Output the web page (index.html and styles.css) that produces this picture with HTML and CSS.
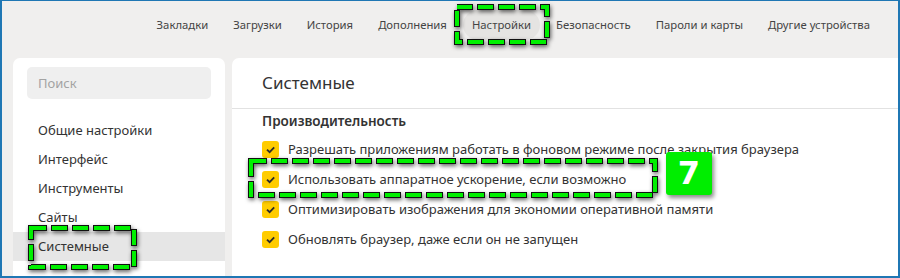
FILE: index.html
```html
<!DOCTYPE html>
<html lang="ru">
<head>
    <meta charset="UTF-8">
    <title>Настройки</title>
    <link rel="stylesheet" href="styles.css">
</head>
<body>
    <div class="frame">
        <nav class="topnav">
            <span class="tab">Закладки</span>
            <span class="tab">Загрузки</span>
            <span class="tab">История</span>
            <span class="tab">Дополнения</span>
            <span class="tab active">Настройки</span>
            <span class="tab">Безопасность</span>
            <span class="tab">Пароли и карты</span>
            <span class="tab">Другие устройства</span>
        </nav>
        <div class="content">
            <aside class="sidebar">
                <div class="search">Поиск</div>
                <ul class="menu">
                    <li>Общие настройки</li>
                    <li>Интерфейс</li>
                    <li>Инструменты</li>
                    <li>Сайты</li>
                    <li class="selected">Системные</li>
                </ul>
            </aside>
            <main class="panel">
                <h1 class="panel-title">Системные</h1>
                <section class="group">
                    <h2 class="group-title">Производительность</h2>
                    <label class="option"><span class="check"><svg width="17" height="17" viewBox="0 0 17 17"><path d="M5 8.6l2.6 2.6L12.2 6.4" fill="none" stroke="#2b2b2b" stroke-width="1.8"/></svg></span>Разрешать приложениям работать в фоновом режиме после закрытия браузера</label>
                    <label class="option"><span class="check"><svg width="17" height="17" viewBox="0 0 17 17"><path d="M5 8.6l2.6 2.6L12.2 6.4" fill="none" stroke="#2b2b2b" stroke-width="1.8"/></svg></span>Использовать аппаратное ускорение, если возможно</label>
                    <label class="option"><span class="check"><svg width="17" height="17" viewBox="0 0 17 17"><path d="M5 8.6l2.6 2.6L12.2 6.4" fill="none" stroke="#2b2b2b" stroke-width="1.8"/></svg></span>Оптимизировать изображения для экономии оперативной памяти</label>
                    <label class="option"><span class="check"><svg width="17" height="17" viewBox="0 0 17 17"><path d="M5 8.6l2.6 2.6L12.2 6.4" fill="none" stroke="#2b2b2b" stroke-width="1.8"/></svg></span>Обновлять браузер, даже если он не запущен</label>
                </section>
            </main>
        </div>

        <!-- пометки поверх скриншота -->
        <svg class="mark mark-nav" width="96" height="41">
            <rect class="mark-line" x="3" y="3" width="90" height="35"/>
            <rect class="mark-dash" x="3" y="3" width="90" height="35"/>
        </svg>
        <svg class="mark mark-side" width="109" height="45">
            <rect class="mark-line" x="3" y="3" width="103" height="39"/>
            <rect class="mark-dash" x="3" y="3" width="103" height="39"/>
        </svg>
        <svg class="mark mark-row" width="410" height="40">
            <rect class="mark-line" x="3" y="3" width="404" height="34"/>
            <rect class="mark-dash" x="3" y="3" width="404" height="34"/>
        </svg>
        <div class="step">7</div>
    </div>
</body>
</html>
```

FILE: styles.css
```css
* {
    box-sizing: border-box;
}
body {
    margin: 0;
    font-family: "Noto Sans", "Open Sans", sans-serif;
    color: #333;
}
.frame {
    position: relative;
    width: 900px;
    height: 278px;
    border: 2px solid #1f77b4;
    border-top-width: 1px;
    background: #f0efee;
    overflow: hidden;
}
.topnav {
    display: flex;
    justify-content: flex-end;
    gap: 7px;
    height: 57px;
    padding: 9px 19px 0 0;
}
.tab {
    height: 30px;
    line-height: 30px;
    padding: 0 9px;
    font-size: 11.3px;
    color: #444;
    border-radius: 15px;
}
.tab.active {
    background: #e5e4e2;
}
.content {
    display: flex;
    gap: 7px;
    padding-left: 11px;
}
.sidebar {
    width: 212px;
    height: 230px;
    background: #fff;
    border-radius: 7px 7px 0 0;
    padding-top: 9px;
}
.search {
    width: 184px;
    height: 32px;
    margin-left: 14px;
    padding-left: 11px;
    line-height: 32px;
    font-size: 13px;
    color: #a3a3a3;
    background: #efefef;
    border-radius: 5px;
}
.menu {
    list-style: none;
    margin: 17px 0 0;
    padding: 0;
}
.menu li {
    height: 29px;
    line-height: 29px;
    padding-left: 25px;
    font-size: 13px;
}
.menu li.selected {
    background: #e6e6e6;
}
.panel {
    flex: 1;
    height: 230px;
    background: #fff;
    border-radius: 7px 0 0 0;
}
.panel-title {
    margin: 0;
    height: 51px;
    line-height: 50px;
    padding-left: 30px;
    font-size: 17px;
    font-weight: normal;
    border-bottom: 1px solid #e2e2e2;
}
.group {
    padding-left: 30px;
}
.group-title {
    margin: 0;
    height: 25px;
    line-height: 25px;
    font-size: 13.5px;
    font-weight: 600;
}
.option {
    display: flex;
    align-items: center;
    gap: 9px;
    height: 30px;
    font-size: 13px;
}
.check {
    width: 17px;
    height: 17px;
    background: #ffcc00;
    border-radius: 3px;
}
.check svg {
    display: block;
}
.mark {
    position: absolute;
    overflow: visible;
    filter: drop-shadow(1px 2px 2px rgba(0, 0, 0, 0.6));
}
.mark-line {
    fill: none;
    stroke: #111;
    stroke-width: 6;
    stroke-dasharray: 17 4;
    stroke-dashoffset: 1;
}
.mark-dash {
    fill: none;
    stroke: #00f000;
    stroke-width: 4;
    stroke-dasharray: 15 6;
}
.mark-nav {
    left: 452px;
    top: 3px;
}
.mark-side {
    left: 26px;
    top: 224px;
}
.mark-row {
    left: 246px;
    top: 157px;
}
.step {
    position: absolute;
    left: 664px;
    top: 151px;
    width: 46px;
    height: 43px;
    line-height: 43px;
    text-align: center;
    background: #00ee00;
    color: #fff;
    font-family: "DejaVu Sans", sans-serif;
    font-size: 32px;
    font-weight: bold;
    border-radius: 3px;
    box-shadow: 2px 3px 4px rgba(0, 0, 0, 0.45);
}
```
